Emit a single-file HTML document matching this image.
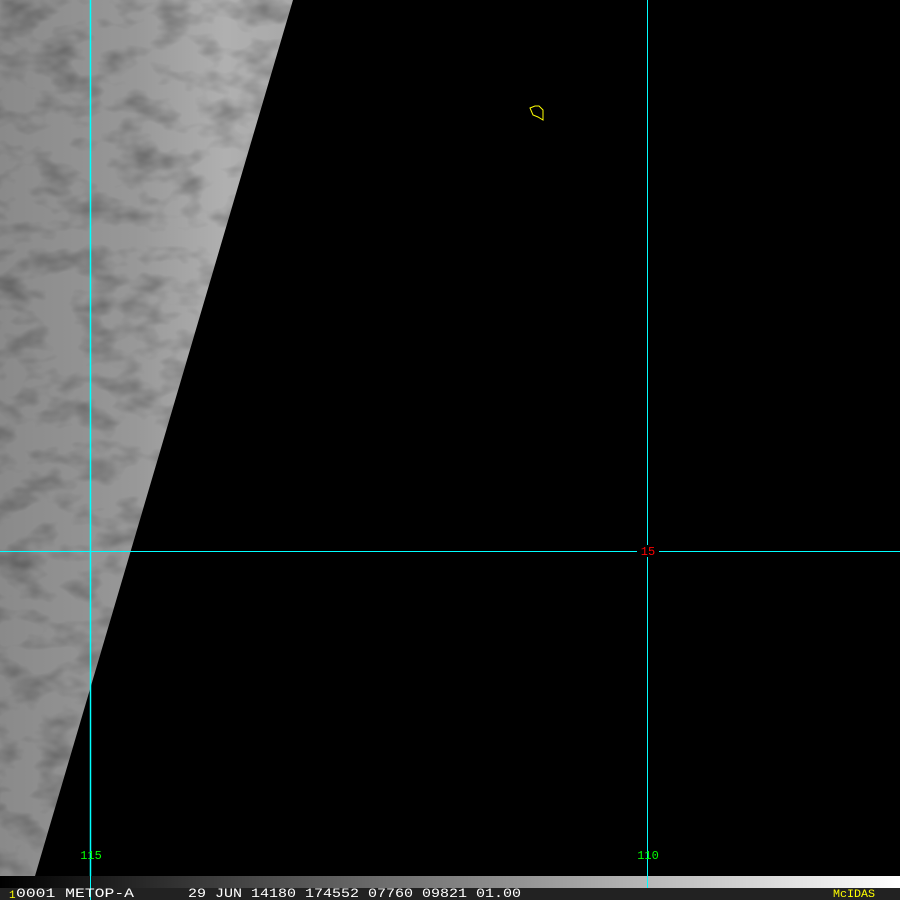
<!DOCTYPE html>
<html><head><style>
html,body{margin:0;padding:0;background:#000;width:900px;height:900px;overflow:hidden}
svg{display:block}
</style></head><body>
<svg width="900" height="900" viewBox="0 0 900 900" xmlns="http://www.w3.org/2000/svg">
<defs>
<linearGradient id="cl" x1="0" y1="0" x2="1" y2="0">
<stop offset="0" stop-color="#8a8a8a"/>
<stop offset="0.45" stop-color="#989898"/>
<stop offset="0.75" stop-color="#b0b0b0"/>
<stop offset="1" stop-color="#a8a8a8"/>
</linearGradient>
<linearGradient id="bar" x1="0" y1="0" x2="1" y2="0">
<stop offset="0" stop-color="#000"/>
<stop offset="1" stop-color="#fff"/>
</linearGradient>
<filter id="n" x="0" y="0" width="100%" height="100%">
<feTurbulence type="fractalNoise" baseFrequency="0.025 0.04" numOctaves="3" seed="4"/>
<feColorMatrix type="matrix" values="0 0 0 0 0  0 0 0 0 0  0 0 0 0 0  0 0 0 -1.2 0.65"/>
</filter>
<clipPath id="cp"><polygon points="0,0 293,0 35,876 0,876"/></clipPath>
</defs>
<rect width="900" height="900" fill="#000"/>
<g clip-path="url(#cp)">
<rect x="0" y="0" width="300" height="876" fill="url(#cl)"/>
<rect x="0" y="0" width="300" height="876" filter="url(#n)" opacity="0.55"/>
</g>
<line x1="0" y1="551.5" x2="637" y2="551.5" stroke="#0ff" stroke-width="1"/>
<line x1="659" y1="551.5" x2="900" y2="551.5" stroke="#0ff" stroke-width="1"/>
<line x1="90.5" y1="0" x2="90.5" y2="888" stroke="#0ff" stroke-width="1.5"/>
<line x1="647.5" y1="0" x2="647.5" y2="545" stroke="#0ff" stroke-width="1"/>
<line x1="647.5" y1="557" x2="647.5" y2="888" stroke="#0ff" stroke-width="1"/>
<polygon points="530,108 535,106 539,106 543,110 543,120 538,117 533,115" fill="none" stroke="#ff0" stroke-width="1"/>
<text x="648" y="555" fill="#f00" font-family="Liberation Mono, monospace" font-size="12" text-anchor="middle">15</text>
<text x="91" y="859" fill="#0f0" font-family="Liberation Mono, monospace" font-size="12" text-anchor="middle">115</text>
<text x="648" y="859" fill="#0f0" font-family="Liberation Mono, monospace" font-size="12" text-anchor="middle">110</text>
<rect x="0" y="876" width="900" height="12" fill="url(#bar)"/>
<rect x="0" y="888" width="900" height="12" fill="#222"/>
<line x1="90.5" y1="876" x2="90.5" y2="900" stroke="#0ff"/>
<line x1="647.5" y1="876" x2="647.5" y2="888" stroke="#0ff"/>
<text x="9" y="898" fill="#ff0" font-family="Liberation Mono, monospace" font-size="11">1</text>
<text x="16" y="897" fill="#fff" font-family="Liberation Mono, monospace" font-size="12.5" textLength="118" lengthAdjust="spacingAndGlyphs">0001 METOP-A</text>
<text x="188" y="897" fill="#fff" font-family="Liberation Mono, monospace" font-size="12.5" textLength="333" lengthAdjust="spacingAndGlyphs">29 JUN 14180 174552 07760 09821 01.00</text>
<text x="833" y="897" fill="#ff0" font-family="Liberation Mono, monospace" font-size="11" textLength="42" lengthAdjust="spacingAndGlyphs">McIDAS</text>
</svg>
</body></html>
